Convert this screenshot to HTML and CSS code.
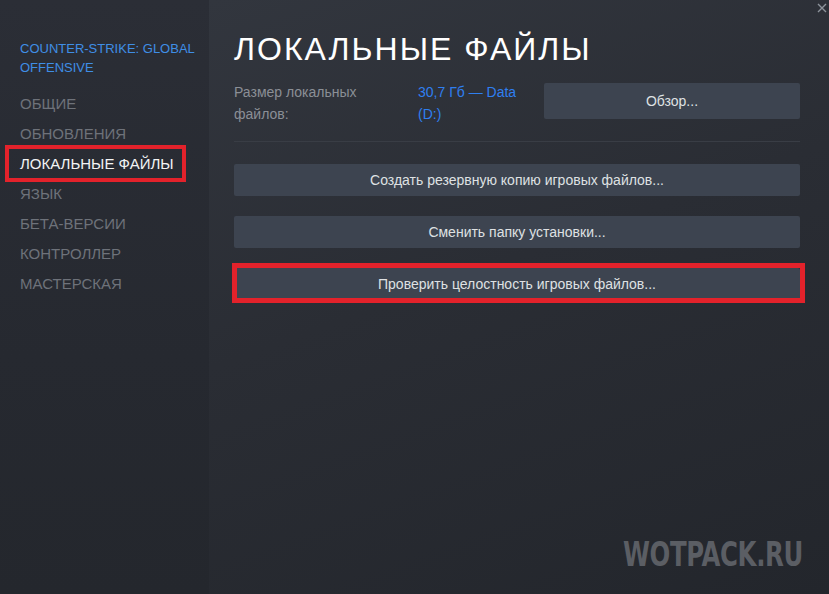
FILE: index.html
```html
<!DOCTYPE html>
<html lang="ru">
<head>
<meta charset="utf-8">
<title>Локальные файлы</title>
<link rel="stylesheet" href="styles.css">
</head>
<body>
<div class="window">
  <aside class="sidebar">
    <div class="game-title">COUNTER-STRIKE: GLOBAL OFFENSIVE</div>
    <nav class="nav">
      <div class="nav-item">ОБЩИЕ</div>
      <div class="nav-item">ОБНОВЛЕНИЯ</div>
      <div class="nav-item active marked">ЛОКАЛЬНЫЕ ФАЙЛЫ</div>
      <div class="nav-item">ЯЗЫК</div>
      <div class="nav-item">БЕТА-ВЕРСИИ</div>
      <div class="nav-item">КОНТРОЛЛЕР</div>
      <div class="nav-item">МАСТЕРСКАЯ</div>
    </nav>
  </aside>
  <main class="main">
    <button class="close" aria-label="Закрыть">
      <svg width="10" height="10" viewBox="0 0 10 10"><path d="M1 1L9 9M9 1L1 9" stroke="#8d939b" stroke-width="1.4" fill="none"/></svg>
    </button>
    <h1 class="title">ЛОКАЛЬНЫЕ ФАЙЛЫ</h1>
    <div class="info-row">
      <div class="info-label">Размер локальных файлов:</div>
      <div class="info-value">30,7 Гб — Data (D:)</div>
      <button class="btn btn-browse">Обзор...</button>
    </div>
    <div class="separator"></div>
    <div class="actions">
      <button class="btn">Создать резервную копию игровых файлов...</button>
      <button class="btn">Сменить папку установки...</button>
      <button class="btn marked-btn">Проверить целостность игровых файлов...</button>
    </div>
    <div class="watermark">WOTPACK.RU</div>
  </main>
</div>
</body>
</html>
```

FILE: styles.css
```css
html, body {
  margin: 0;
  padding: 0;
  height: 100%;
}
body {
  font-family: "Liberation Sans", Arial, sans-serif;
  background: #24272e;
}
.window {
  display: flex;
  width: 829px;
  height: 594px;
  overflow: hidden;
}
.sidebar {
  width: 209px;
  flex: none;
  box-sizing: border-box;
  padding: 39px 4px 0 20px;
  background: linear-gradient(180deg, #2b2e36 0%, #262930 60%, #24272d 100%);
}
.game-title {
  color: #3f8ee6;
  font-size: 13px;
  line-height: 19px;
}
.nav {
  margin-top: 12px;
  display: flex;
  flex-direction: column;
}
.nav-item {
  position: relative;
  color: #6e727a;
  font-size: 15px;
  line-height: 30px;
  height: 30px;
}
.nav-item.active {
  color: #f2f3f4;
}
.marked::after {
  content: "";
  position: absolute;
  left: -15px;
  top: -4px;
  width: 181px;
  height: 37px;
  box-sizing: border-box;
  border: 4px solid #e3222b;
}
.main {
  position: relative;
  flex: 1;
  padding: 29px 29px 0 25px;
  background: linear-gradient(160deg, #32363e 0%, #2a2d34 45%, #23262c 100%);
}
.close {
  position: absolute;
  top: 3px;
  right: 2px;
  background: none;
  border: 0;
  padding: 0;
  width: 10px;
  height: 10px;
  cursor: pointer;
}
.close svg {
  display: block;
}
.title {
  margin: 0;
  color: #ffffff;
  font-weight: normal;
  font-size: 32px;
  line-height: 40px;
  letter-spacing: 2px;
}
.info-row {
  display: flex;
  align-items: flex-start;
  margin-top: 14px;
}
.info-label {
  width: 184px;
  flex: none;
  padding-right: 20px;
  box-sizing: border-box;
  color: #8b8f96;
  font-size: 14px;
  line-height: 22px;
  margin-top: -2px;
}
.info-value {
  width: 126px;
  flex: none;
  padding-right: 16px;
  box-sizing: border-box;
  color: #2f7ff0;
  font-size: 14px;
  line-height: 22px;
  margin-top: -2px;
}
.btn {
  display: block;
  width: 100%;
  height: 32px;
  border: 0;
  border-radius: 2px;
  background: #3d4450;
  color: #dfe1e3;
  font-family: "Liberation Sans", Arial, sans-serif;
  font-size: 14px;
  padding: 0;
  cursor: pointer;
}
.btn-browse {
  flex: 1;
  height: 36px;
}
.separator {
  height: 1px;
  background: #393d45;
  margin-top: 16px;
}
.actions {
  display: flex;
  flex-direction: column;
  gap: 20px;
  margin-top: 22px;
}
.marked-btn {
  position: relative;
}
.marked-btn::after {
  content: "";
  position: absolute;
  left: -2px;
  top: -5px;
  right: -5px;
  bottom: -3px;
  border: 5px solid #e3222b;
}
.watermark {
  position: absolute;
  left: 414px;
  top: 535px;
  color: #5b5e64;
  font-family: "DejaVu Sans", sans-serif;
  font-weight: bold;
  font-size: 33px;
  line-height: 40px;
  transform: scaleX(0.74);
  transform-origin: left center;
  letter-spacing: -0.5px;
}
```
